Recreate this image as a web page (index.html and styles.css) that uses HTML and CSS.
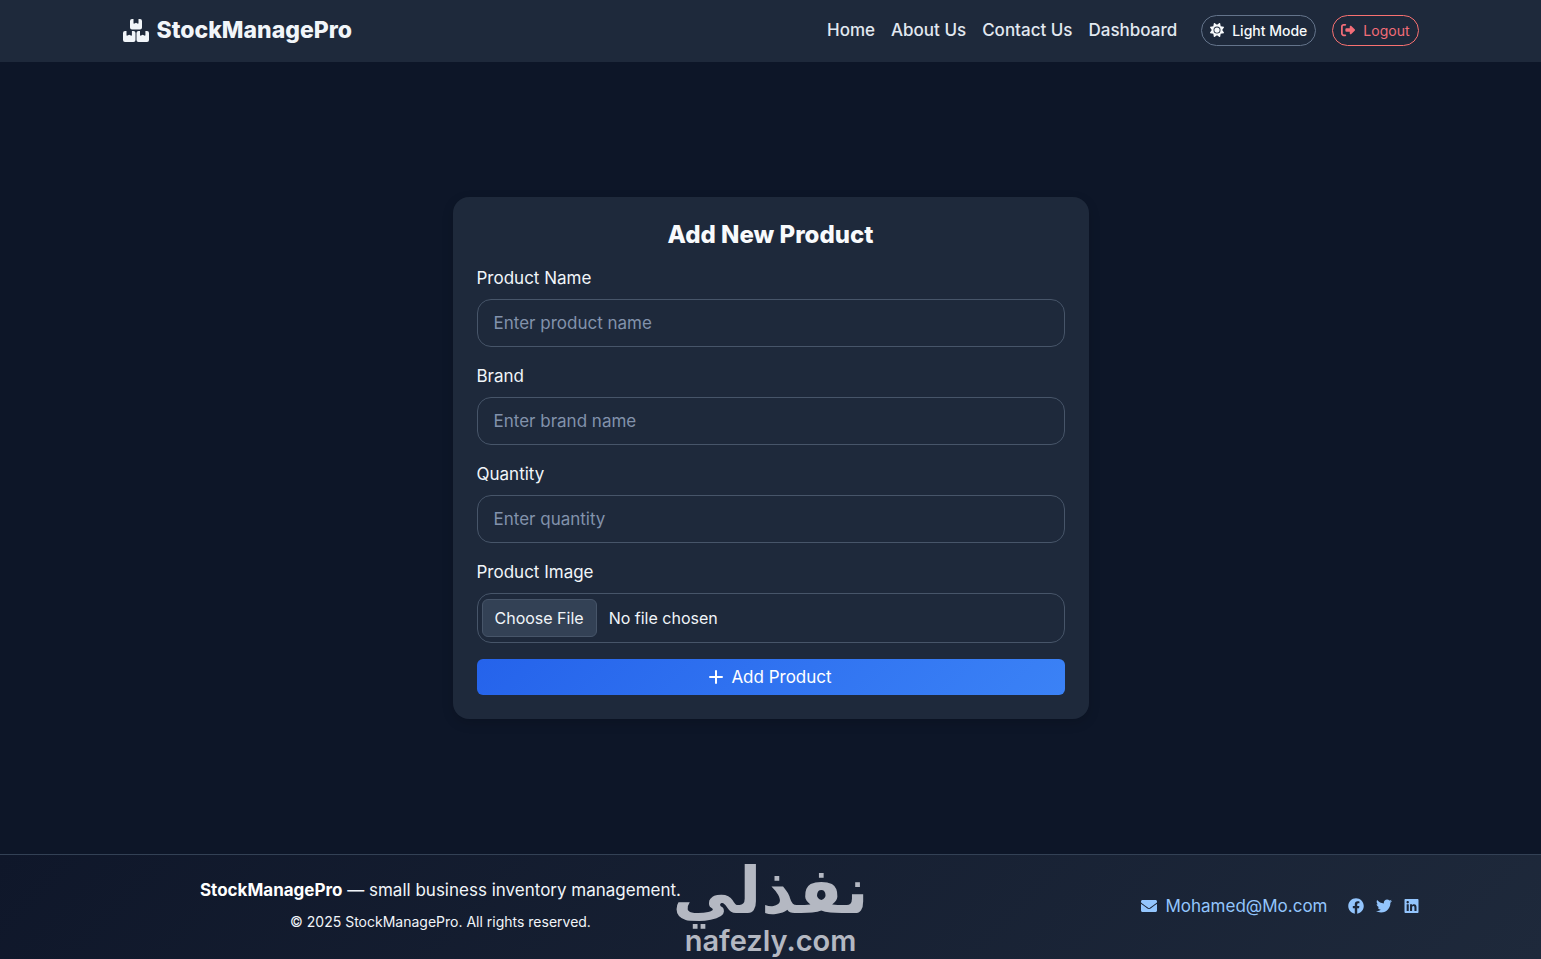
FILE: index.html
```html
<!DOCTYPE html>
<html lang="en">
<head>
<meta charset="utf-8">
<meta name="viewport" content="width=device-width, initial-scale=1">
<title>Add New Product - StockManagePro</title>
<link rel="stylesheet" href="styles.css">
</head>
<body>
<header class="navbar">
  <div class="container navbar-inner">
    <a class="brand" href="#">
      <svg class="brand-icon" viewBox="0 0 26 23" aria-hidden="true"><path d="M9 0h1.500v4q0 1 1 .6l1.500-.8 1.500.8q1 .4 1-.6V0H17q2 0 2 2v6.500q0 2-2 2H9q-2 0-2-2V2q0-2 2-2zM2 12h1.500v4q0 1 1 .6l1.700-.8 1.700.8q1 .4 1-.6v-4h1.600q2 0 2 2v7q0 2-2 2H2q-2 0-2-2v-7q0-2 2-2zM15.500 12H17v4q0 1 1 .6l1.700-.8 1.700.8q1 .4 1-.6v-4H24q2 0 2 2v7q0 2-2 2h-8.500q-2 0-2-2v-7q0-2 2-2z"/></svg>
      <span>StockManagePro</span>
    </a>
    <nav class="menu">
      <a href="#">Home</a>
      <a href="#">About Us</a>
      <a href="#">Contact Us</a>
      <a href="#">Dashboard</a>
    </nav>
    <div class="actions">
      <button class="pill" type="button"><svg class="icon" viewBox="0 0 512 512" aria-hidden="true"><path d="M361.5 1.2c5 2.100 8.600 6.600 9.600 11.900L391 121l107.900 19.800c5.300 1 9.800 4.600 11.900 9.600s1.500 10.700-1.600 15.200L446.900 256l62.300 90.300c3.100 4.500 3.700 10.200 1.600 15.200s-6.600 8.600-11.900 9.600L391 391 371.100 498.900c-1 5.300-4.600 9.800-9.600 11.900s-10.700 1.500-15.200-1.600L256 446.900l-90.300 62.300c-4.500 3.100-10.200 3.700-15.200 1.600s-8.600-6.600-9.600-11.900L121 391 13.100 371.100c-5.300-1-9.800-4.600-11.900-9.600s-1.500-10.700 1.600-15.200L65.100 256 2.800 165.700c-3.100-4.500-3.700-10.200-1.600-15.200s6.600-8.600 11.900-9.600L121 121 140.900 13.100c1-5.300 4.600-9.800 9.600-11.900s10.700-1.500 15.200 1.600L256 65.100 346.300 2.800c4.500-3.100 10.200-3.700 15.200-1.600zM160 256a96 96 0 1 1 192 0 96 96 0 1 1 -192 0zm224 0a128 128 0 1 0 -256 0 128 128 0 1 0 256 0z"/></svg>Light Mode</button>
      <button class="pill pill-danger" type="button"><svg class="icon" viewBox="0 0 512 512" aria-hidden="true"><path d="M377.900 105.900L500.700 228.700c7.200 7.200 11.300 17.100 11.300 27.300s-4.100 20.100-11.300 27.300L377.900 406.100c-6.400 6.400-15 9.900-24 9.900c-18.700 0-33.900-15.200-33.900-33.900l0-62.100-128 0c-17.700 0-32-14.300-32-32l0-64c0-17.700 14.300-32 32-32l128 0 0-62.100c0-18.700 15.200-33.900 33.900-33.900c9 0 17.600 3.600 24 9.900zM160 96L96 96c-17.700 0-32 14.300-32 32l0 256c0 17.700 14.300 32 32 32l64 0c17.700 0 32 14.300 32 32s-14.300 32-32 32l-64 0c-53 0-96-43-96-96L0 128C0 75 43 32 96 32l64 0c17.700 0 32 14.300 32 32s-14.300 32-32 32z"/></svg>Logout</button>
    </div>
  </div>
</header>

<main class="page">
  <form class="card">
    <h1 class="card-title">Add New Product</h1>
    <div class="field">
      <label for="name">Product Name</label>
      <input class="control" id="name" type="text" placeholder="Enter product name">
    </div>
    <div class="field">
      <label for="brand">Brand</label>
      <input class="control" id="brand" type="text" placeholder="Enter brand name">
    </div>
    <div class="field">
      <label for="quantity">Quantity</label>
      <input class="control" id="quantity" type="text" inputmode="numeric" placeholder="Enter quantity">
    </div>
    <div class="field">
      <label for="image">Product Image</label>
      <input class="control control-file" id="image" type="file">
    </div>
    <button class="submit" type="submit"><svg class="plus" viewBox="0 0 14 14" aria-hidden="true"><path d="M7 1v12M1 7h12"/></svg>Add Product</button>
  </form>
</main>

<footer class="footer">
  <div class="container footer-inner">
    <div class="about">
      <p><strong>StockManagePro</strong> — small business inventory management.</p>
      <p class="copyright">© 2025 StockManagePro. All rights reserved.</p>
    </div>
    <div class="contact">
      <a class="mail" href="mailto:Mohamed@Mo.com"><svg class="social" viewBox="0 0 512 512" aria-hidden="true"><path d="M502.300 190.800c3.900-3.100 9.700-.2 9.700 4.700V400c0 26.500-21.500 48-48 48H48c-26.500 0-48-21.500-48-48V195.600c0-5 5.700-7.800 9.700-4.700 22.400 17.400 52.100 39.500 154.100 113.600 21.100 15.400 56.700 47.800 92.200 47.600 35.700.3 72-32.800 92.300-47.600 102-74.100 131.600-96.300 154-113.700zM256 320c23.200.4 56.600-29.200 73.400-41.400 132.700-96.300 142.800-104.700 173.400-128.700 5.800-4.500 9.200-11.500 9.200-18.900v-19c0-26.500-21.500-48-48-48H48c-26.500 0-48 21.500-48 48v19c0 7.400 3.400 14.300 9.200 18.900 30.600 23.900 40.700 32.400 173.400 128.700 16.800 12.200 50.200 41.800 73.400 41.400z"/></svg>Mohamed@Mo.com</a>
      <div class="socials">
        <a href="#" aria-label="Facebook"><svg class="social" viewBox="0 0 512 512"><path d="M504 256C504 119 393 8 256 8S8 119 8 256c0 123.780 90.690 226.380 209.250 245V327.690h-63V256h63v-54.640c0-62.150 37-96.480 93.670-96.480 27.140 0 55.520 4.840 55.520 4.840v61h-31.280c-30.800 0-40.410 19.120-40.410 38.730V256h68.780l-11 71.690h-57.780V501C413.310 482.380 504 379.780 504 256z"/></svg></a>
        <a href="#" aria-label="Twitter"><svg class="social" viewBox="0 0 512 512"><path d="M459.370 151.716c.325 4.548.325 9.097.325 13.645 0 138.720-105.583 298.558-298.558 298.558-59.452 0-114.680-17.219-161.137-47.106 8.447.974 16.568 1.299 25.340 1.299 49.055 0 94.213-16.568 130.274-44.832-46.132-.975-84.792-31.188-98.112-72.772 6.498.974 12.995 1.624 19.818 1.624 9.421 0 18.843-1.300 27.614-3.573-48.081-9.747-84.143-51.980-84.143-102.985v-1.299c13.969 7.797 30.214 12.670 47.431 13.319-28.264-18.843-46.781-51.005-46.781-87.391 0-19.492 5.197-37.360 14.294-52.954 51.655 63.675 129.300 105.258 216.365 109.807-1.624-7.797-2.599-15.918-2.599-24.040 0-57.828 46.782-104.934 104.934-104.934 30.213 0 57.502 12.670 76.670 33.137 23.715-4.548 46.456-13.320 66.599-25.340-7.798 24.366-24.366 44.833-46.132 57.827 21.117-2.273 41.584-8.122 60.426-16.243-14.292 20.791-32.161 39.308-52.628 54.253z"/></svg></a>
        <a href="#" aria-label="LinkedIn"><svg class="social social-narrow" viewBox="0 0 448 512"><path d="M416 32H31.900C14.300 32 0 46.500 0 64.300v383.400C0 465.500 14.300 480 31.900 480H416c17.600 0 32-14.500 32-32.300V64.300c0-17.800-14.400-32.300-32-32.300zM135.400 416H69V202.200h66.500V416zm-33.200-243c-21.300 0-38.500-17.300-38.500-38.500S80.900 96 102.200 96c21.200 0 38.500 17.300 38.500 38.500 0 21.300-17.200 38.500-38.500 38.500zm282.100 243h-66.400V312c0-24.800-.5-56.700-34.500-56.700-34.600 0-39.900 27-39.900 54.900V416h-66.400V202.200h63.700v29.200h.9c8.900-16.800 30.600-34.500 62.900-34.500 67.200 0 79.700 44.300 79.700 101.900V416z"/></svg></a>
      </div>
    </div>
  </div>
  <div class="watermark">
    <span class="watermark-ar" lang="ar" dir="rtl">نفذلي</span>
    <span class="watermark-en">nafezly.com</span>
  </div>
</footer>
</body>
</html>
```
FILE: styles.css
```css
* { box-sizing: border-box; }

body {
  margin: 0;
  min-height: 100vh;
  display: flex;
  flex-direction: column;
  background: #0d1628;
  color: #f1f5f9;
  font-family: Inter, "Open Sans", sans-serif;
  font-size: 17px;
  line-height: 26px;
}

a { color: inherit; text-decoration: none; }
p, h1 { margin: 0; }
button, input { font: inherit; color: inherit; }
button { cursor: pointer; }
svg { fill: currentColor; flex: none; }

.container {
  width: 100%;
  max-width: 1320px;
  margin: 0 auto;
  padding: 0 12px;
}

/* Header */
.navbar { background: #1e293b; }
.navbar-inner {
  display: flex;
  align-items: center;
  min-height: 62px;
  padding-bottom: 2px;
}
.brand {
  display: flex;
  align-items: center;
  gap: 8px;
  margin-right: auto;
  font-size: 23px;
  font-weight: 800;
  color: #f1f5f9;
}
.brand-icon { width: 26px; height: 23px; }
.menu {
  display: flex;
  gap: 16px;
  font-weight: 500;
  color: #e2e8f0;
}
.actions {
  display: flex;
  gap: 16px;
  margin-left: 24px;
}
.pill {
  display: flex;
  align-items: center;
  gap: 8px;
  padding: 4px 8px;
  border: 1px solid #64748b;
  border-radius: 16px;
  background: none;
  font-size: 14px;
  font-weight: 500;
  line-height: 21px;
  color: #f8fafc;
}
.pill-danger {
  border-color: #f87171;
  color: #f26d78;
  font-weight: 400;
}
.icon { width: 14px; height: 14px; }

/* Form card */
.page {
  flex: 1;
  display: flex;
  align-items: center;
  justify-content: center;
  padding: 24px 12px;
}
.card {
  width: 100%;
  max-width: 636px;
  padding: 24px;
  border-radius: 16px;
  background: #1e293b;
  box-shadow: 0 4px 12px rgba(0, 0, 0, 0.15);
}
.card-title {
  margin-bottom: 16px;
  font-size: 24px;
  font-weight: 800;
  line-height: 28px;
  text-align: center;
  color: #f8fafc;
}
.field {
  display: flex;
  flex-direction: column;
  gap: 8px;
  margin-bottom: 16px;
}
.control {
  width: 100%;
  padding: 10px 16px;
  border: 1px solid #475569;
  border-radius: 14px;
  background: #1e293b;
  line-height: 26px;
}
.control::placeholder { color: #8292ab; opacity: 1; }
.control-file { padding: 5px 4px; font-size: 16px; }
.control-file::file-selector-button {
  margin: 0 12px 0 0;
  padding: 5px 12px;
  border: 1px solid #475569;
  border-radius: 6px;
  background: #334155;
  color: #f1f5f9;
  font: inherit;
}
.submit {
  display: flex;
  align-items: center;
  justify-content: center;
  gap: 8px;
  width: 100%;
  padding: 5px 12px;
  border: 0;
  border-radius: 6px;
  background: linear-gradient(135deg, #2563eb, #3b82f6);
  color: #fff;
}
.plus {
  width: 14px;
  height: 14px;
  fill: none;
  stroke: currentColor;
  stroke-width: 2;
  stroke-linecap: round;
}

/* Footer */
.footer {
  position: relative;
  border-top: 1px solid #334155;
  background: linear-gradient(135deg, #0f172a, #1e293b);
}
.footer-inner {
  display: grid;
  grid-template-columns: 1fr 1fr;
  column-gap: 24px;
  align-items: center;
  padding-top: 22px;
  padding-bottom: 24px;
}
.about { text-align: center; }
.about strong { font-weight: 700; color: #fff; }
.copyright { margin-top: 6px; font-size: 14px; }
.contact {
  display: flex;
  align-items: center;
  justify-content: flex-end;
  gap: 20px;
  color: #93c5fd;
}
.mail { display: flex; align-items: center; gap: 8px; }
.socials { display: flex; gap: 12px; }
.socials a { display: flex; }
.social { width: 16px; height: 16px; }
.social-narrow { width: 15px; height: 16px; }

/* Site mark drawn over the footer */
.watermark {
  position: absolute;
  inset: 0;
  display: flex;
  flex-direction: column;
  align-items: center;
  padding-top: 4px;
  color: #b4b8c2;
  pointer-events: none;
}
.watermark-ar {
  font-family: "DejaVu Sans", sans-serif;
  font-size: 64px;
  font-weight: 700;
  line-height: 64px;
}
.watermark-en {
  font-size: 29px;
  font-weight: 600;
  line-height: 36px;
}
```
